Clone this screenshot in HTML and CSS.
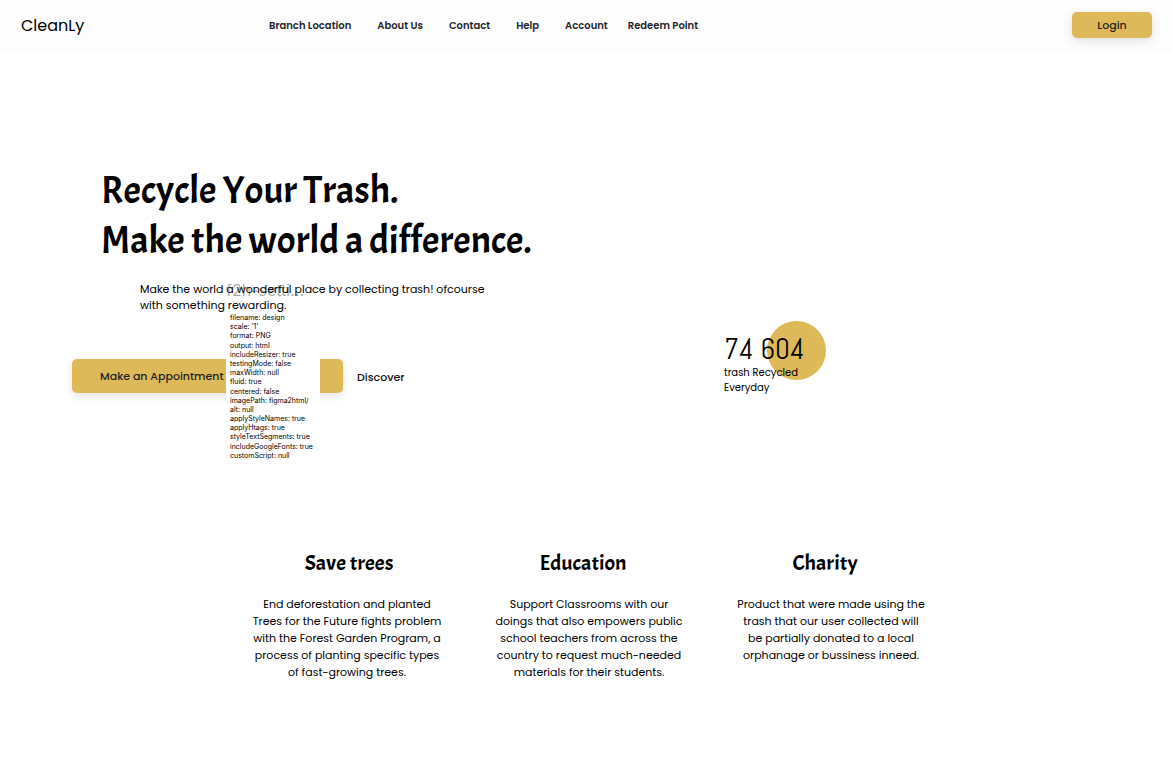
FILE: index.html
```
<!DOCTYPE html>
<html lang="en">
<head>
<meta charset="utf-8">
<meta name="viewport" content="width=device-width, initial-scale=1">
<title>CleanLy</title>
<link rel="stylesheet" href="styles.css">
</head>
<body>
<header class="topbar">
  <a class="logo" href="#">CleanLy</a>
  <nav class="nav">
    <a href="#">Branch Location</a>
    <a href="#">About Us</a>
    <a href="#">Contact</a>
    <a href="#">Help</a>
    <a href="#">Account</a>
    <a class="nav-redeem" href="#">Redeem Point</a>
  </nav>
  <button class="button button-login" type="button">Login</button>
</header>
<main>
  <section class="hero">
    <div class="pitch">
      <h1>Recycle Your Trash.<br>Make the world a difference.</h1>
      <div class="pitch-body">
        <p class="lead">Make the world a wonderful place by collecting trash! ofcourse<br>with something rewarding.</p>
        <div class="actions">
          <button class="button button-primary" type="button">Make an Appointment</button>
          <a class="discover" href="#">Discover</a>
        </div>
        <aside class="settings">
          <div class="settings-title">f2h-setti...</div>
          <ul class="settings-list">
            <li>filename: design</li>
            <li>scale: '1'</li>
            <li>format: PNG</li>
            <li>output: html</li>
            <li>includeResizer: true</li>
            <li>testingMode: false</li>
            <li>maxWidth: null</li>
            <li>fluid: true</li>
            <li>centered: false</li>
            <li>imagePath: figma2html/</li>
            <li>alt: null</li>
            <li>applyStyleNames: true</li>
            <li>applyHtags: true</li>
            <li>styleTextSegments: true</li>
            <li>includeGoogleFonts: true</li>
            <li>customScript: null</li>
          </ul>
        </aside>
      </div>
    </div>
    <div class="stat">
      <div class="stat-number">74 604</div>
      <div class="stat-label">trash Recycled<br>Everyday</div>
    </div>
  </section>
  <section class="features">
    <article class="feature">
      <h2>Save trees</h2>
      <p>End deforestation and planted<br>Trees for the Future fights problem<br>with the Forest Garden Program, a<br>process of planting specific types<br>of fast-growing trees.</p>
    </article>
    <article class="feature">
      <h2>Education</h2>
      <p>Support Classrooms with our<br>doings that also empowers public<br>school teachers from across the<br>country to request much-needed<br>materials for their students.</p>
    </article>
    <article class="feature">
      <h2>Charity</h2>
      <p>Product that were made using the<br>trash that our user collected will<br>be partially donated to a local<br>orphanage or bussiness inneed.</p>
    </article>
  </section>
</main>
</body>
</html>
```
FILE: styles.css
```
* { box-sizing: border-box; }

body {
  margin: 0;
  background: #fff;
  color: #000;
  font: 11px/16px Poppins, Inter, sans-serif;
}

h1, h2, p, ul { margin: 0; padding: 0; }
a { color: inherit; text-decoration: none; }

h1, h2 {
  font-family: Acme, Lato, sans-serif;
  font-weight: 400;
}

.topbar {
  display: flex;
  align-items: center;
  height: 51px;
  padding: 0 20px 1px 21px;
  background: #fdfdfd;
}

.logo {
  width: 248px;
  padding-top: 2px;
  font-size: 16px;
}

.nav {
  display: flex;
  gap: 26px;
  padding-top: 2px;
  color: #25252d;
  font-size: 10px;
  font-weight: 600;
}

.nav-redeem { margin-left: -6px; }

.button {
  border: 0;
  border-radius: 5px;
  background: #deb959;
  box-shadow: 0 3px 8px rgba(0, 0, 0, 0.12);
  color: #1f1f1f;
  font-family: inherit;
  font-size: 11px;
  font-weight: 500;
}

.button-login {
  width: 80px;
  height: 26px;
  margin-left: auto;
}

.hero {
  display: grid;
  grid-template-columns: 1fr 1fr;
  padding-top: 115px;
}

.pitch h1 {
  padding-left: 101px;
  font-size: 39px;
  line-height: 50px;
  white-space: nowrap;
}

.pitch-body {
  position: relative;
  padding: 15px 0 0 72px;
}

.lead {
  padding-left: 68px;
  white-space: nowrap;
}

.actions {
  display: flex;
  align-items: center;
  gap: 14px;
  margin-top: 46px;
}

.button-primary {
  width: 271px;
  height: 34px;
  padding: 0 28px;
  text-align: left;
}

.discover {
  padding-top: 2px;
  color: #111;
  font-weight: 500;
}

.settings {
  position: absolute;
  top: 12px;
  left: 226px;
  width: 94px;
}

.settings-title {
  height: 35px;
  color: rgba(0, 0, 0, 0.35);
  font: 16px/24px Inter, sans-serif;
}

.settings-list {
  display: grid;
  height: 147px;
  padding-left: 4px;
  background: #fff;
  font: 7px/10px Inter, sans-serif;
  list-style: none;
  white-space: nowrap;
}

.settings-list li { height: 9px; }

.stat {
  position: relative;
  align-self: start;
  margin: 169px 0 0 138px;
}

.stat::before {
  content: "";
  position: absolute;
  z-index: -1;
  top: -14px;
  left: 43px;
  width: 59px;
  height: 59px;
  border-radius: 50%;
  background: #deb959;
}

.stat-number {
  font: 400 29px/30px Abel, "Barlow Semi Condensed", Roboto, sans-serif;
}

.stat-label {
  font-size: 10px;
  line-height: 15px;
}

.features {
  display: grid;
  grid-template-columns: repeat(3, 1fr);
  width: 732px;
  max-width: 100%;
  margin: 155px auto 0;
  padding-left: 6px;
}

.feature {
  text-align: center;
}

.feature h2 {
  padding-left: 4px;
  font-size: 22px;
  line-height: 26px;
}

.feature + .feature h2 { padding: 0 12px 0 0; }

.feature p {
  margin-top: 20px;
  line-height: 17px;
}
```
